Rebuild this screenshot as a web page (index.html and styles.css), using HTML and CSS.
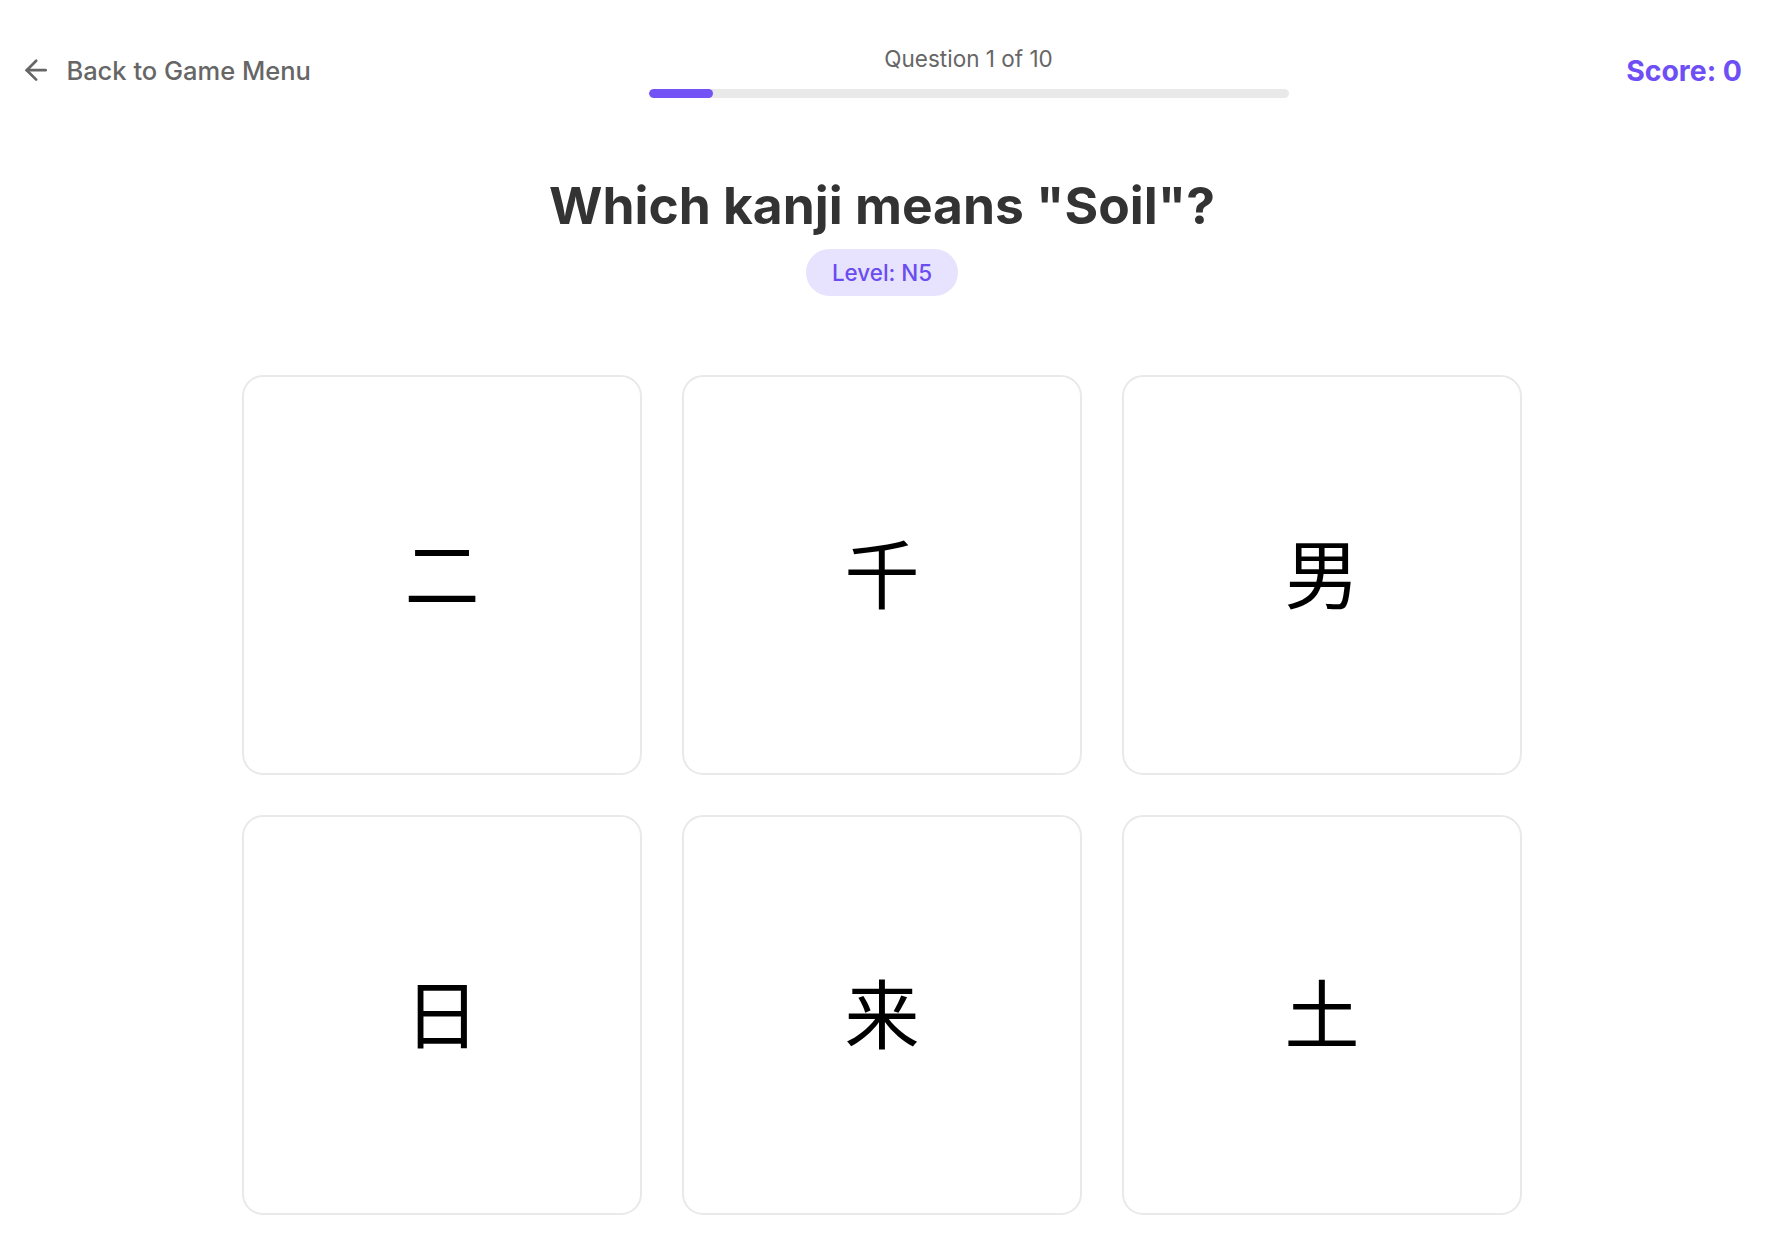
FILE: index.html
```
<!DOCTYPE html>
<html lang="en">
<head>
<meta charset="utf-8">
<title>Kanji Quiz</title>
<link rel="stylesheet" href="styles.css">
</head>
<body>
<header class="topbar">
  <button class="back-btn" type="button">
    <svg class="back-icon" viewBox="0 0 24 24" fill="none" stroke="currentColor" stroke-width="2" stroke-linecap="round" stroke-linejoin="round" aria-hidden="true">
      <path d="m12 19-7-7 7-7"/>
      <path d="M19 12H5"/>
    </svg>
    <span>Back to Game Menu</span>
  </button>
  <div class="progress">
    <div class="progress-label">Question 1 of 10</div>
    <div class="progress-track"><div class="progress-fill" style="width: 10%"></div></div>
  </div>
  <div class="score">Score: 0</div>
</header>

<main class="quiz">
  <h1 class="question">Which kanji means "Soil"?</h1>
  <div class="level">Level: N5</div>

  <div class="options">
    <button class="option" type="button">二</button>
    <button class="option" type="button">千</button>
    <button class="option" type="button">男</button>
    <button class="option" type="button">日</button>
    <button class="option" type="button">来</button>
    <button class="option" type="button">土</button>
  </div>
</main>
</body>
</html>
```

FILE: styles.css
```
html, body {
  margin: 0;
  padding: 0;
  background: #ffffff;
}

body {
  font-family: Inter, "Noto Sans", "Liberation Sans", sans-serif;
  color: #333333;
}

.topbar {
  display: flex;
  align-items: center;
  justify-content: space-between;
  padding: 43px 28px 0 20px;
}

.back-btn {
  display: flex;
  align-items: center;
  gap: 14px;
  background: none;
  border: none;
  padding: 0;
  margin: 0;
  font-family: inherit;
  font-size: 25.5px;
  font-weight: 500;
  color: #666666;
  cursor: pointer;
}

.back-icon {
  width: 32.4px;
  height: 32.4px;
  flex: none;
}

.progress {
  width: 640px;
  display: flex;
  flex-direction: column;
  align-items: center;
  gap: 14px;
}

.progress-label {
  font-size: 22.5px;
  line-height: 32.4px;
  color: #666666;
}

.progress-track {
  width: 100%;
  height: 8.1px;
  border-radius: 5px;
  background: #e9e9e9;
  overflow: hidden;
}

.progress-fill {
  height: 100%;
  border-radius: 5px;
  background: #7453f6;
}

.score {
  font-size: 28.4px;
  font-weight: 700;
  color: #6e4ff5;
}

.quiz {
  display: flex;
  flex-direction: column;
  align-items: center;
  padding: 77px 6px 0 0;
}

.question {
  margin: 0;
  font-size: 51.5px;
  line-height: 61.8px;
  font-weight: 700;
  color: #333333;
}

.level {
  margin-top: 13px;
  padding: 7.3px 26px;
  font-size: 22.4px;
  line-height: 32.4px;
  font-weight: 500;
  color: #6a4cf0;
  background: #e7e2fd;
  border-radius: 999px;
}

.options {
  margin-top: 79px;
  display: grid;
  grid-template-columns: repeat(3, 400px);
  gap: 40px;
}

.option {
  box-sizing: border-box;
  width: 400px;
  height: 400px;
  display: flex;
  align-items: center;
  justify-content: center;
  background: #ffffff;
  border: 2px solid #e9e9e9;
  border-radius: 21px;
  padding: 0 0 9px 0;
  font-family: "Noto Sans CJK JP", "Noto Sans CJK SC", sans-serif;
  font-size: 75px;
  line-height: 1;
  font-weight: 400;
  color: #000000;
  cursor: pointer;
}
```
